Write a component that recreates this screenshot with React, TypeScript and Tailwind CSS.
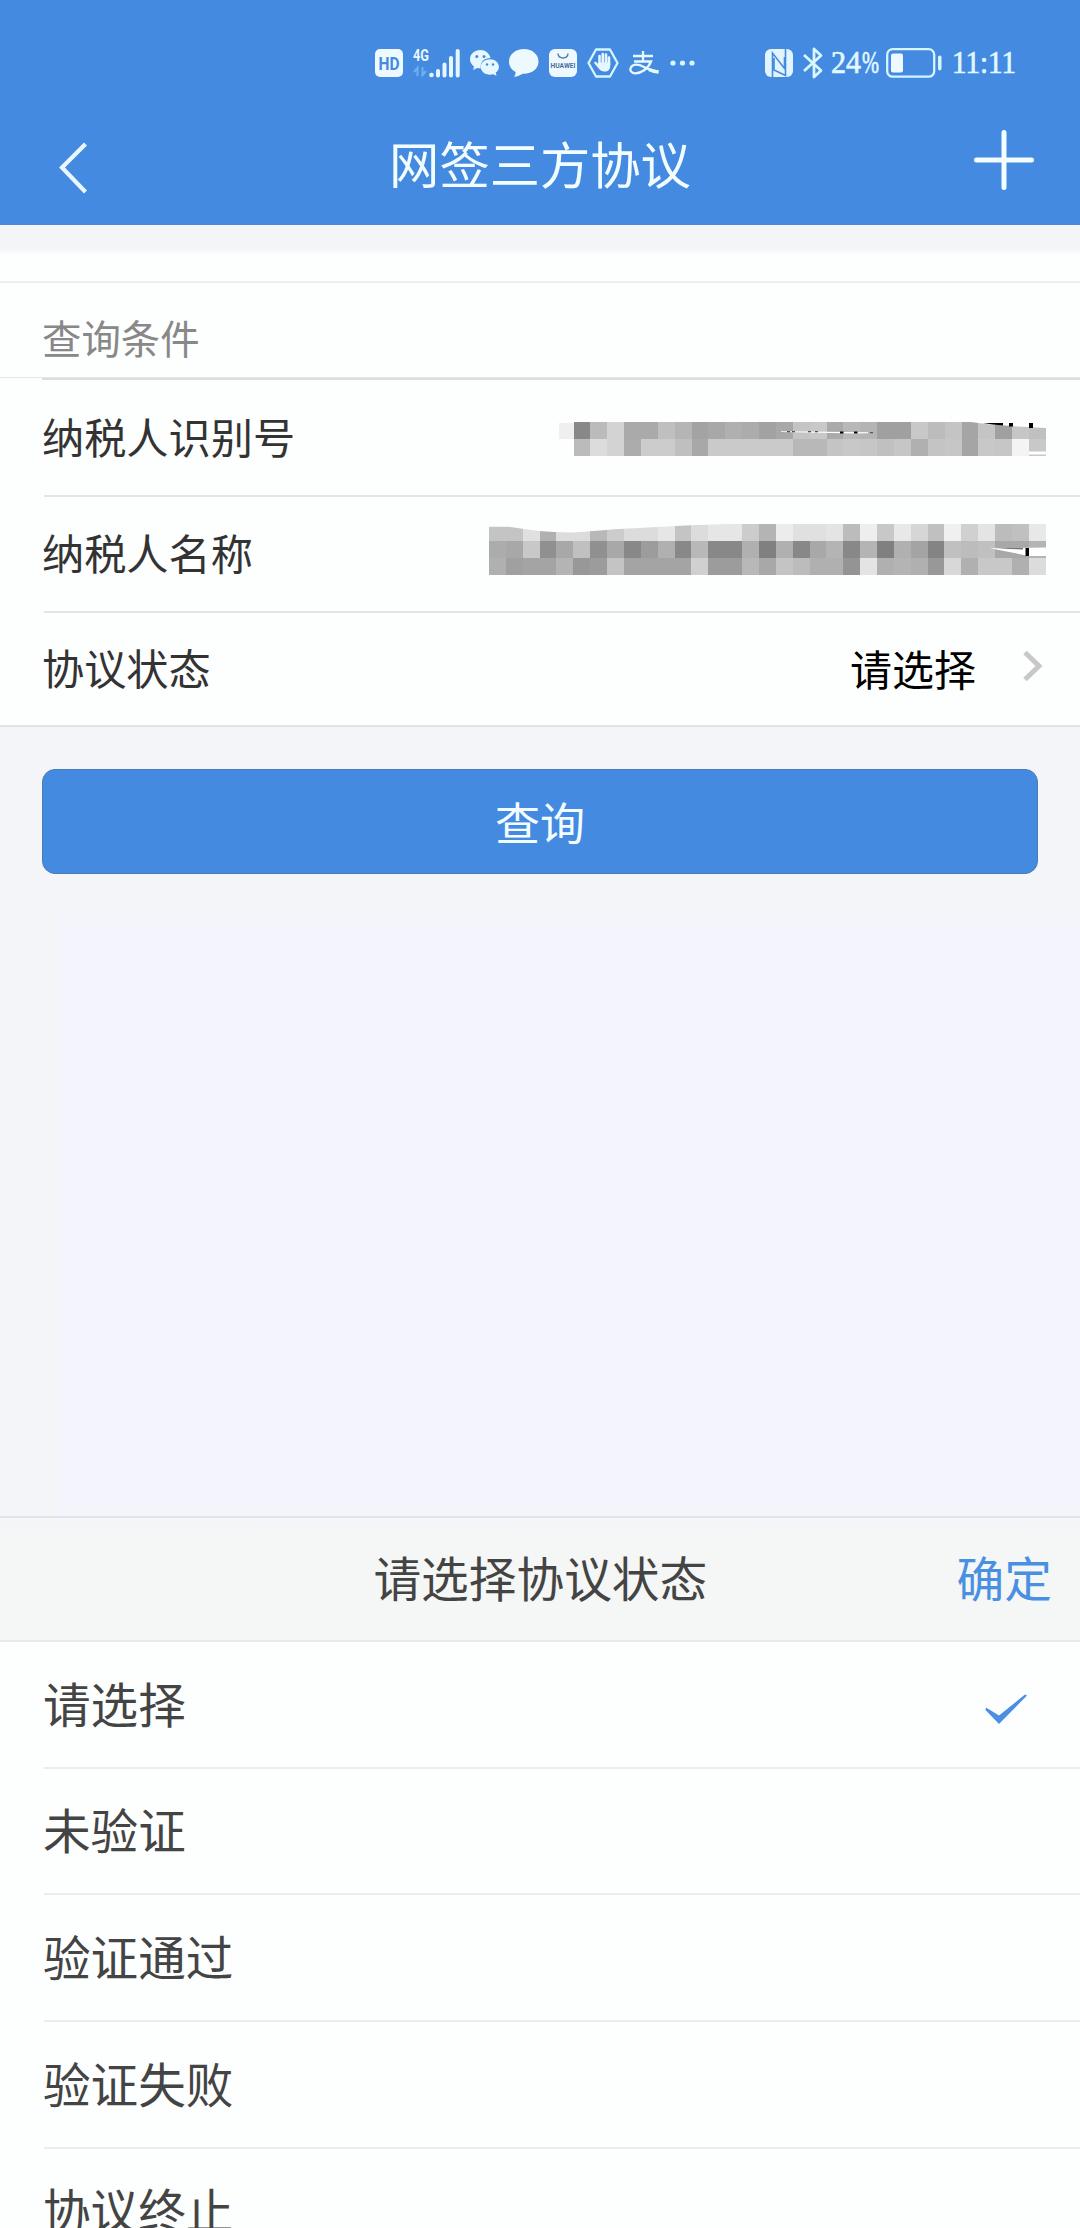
import { useState } from "react";

const statusOptions = ["请选择", "未验证", "验证通过", "验证失败", "协议终止"];

// grey levels of the masked values, one hex pair per cell
const taxNumberMask = [
  "88 bb d3 aa aa bf b5 a3 a8 b0 ac a2 a8 c4 c8 aa b8 b4 a0 a0 c8 bc c4 a5 c4 a0 c6 c0",
  "bb dc d3 ac cc cc bf a8 ca ca ca ca ca b8 b8 c4 c8 c6 c0 c6 b0 c4 c6 a5 c8 c6 f4 c8",
];

const taxNameMask = [
  "c4 c4 e0 b0 dc dc b8 cc dc dc e6 c4 dc e6 e6 cc b4 ec e0 e0 e4 bc ee c8 e8 d6 c0 f0 d0 e4 bc c0 e8",
  "ac a8 c8 90 a8 c0 90 a8 88 9c b0 88 b8 88 88 b0 80 b0 88 a8 b4 88 b4 80 b0 a4 84 c0 bc c0 a8 a8 b4",
  "b0 a0 a4 a4 b4 98 9c c4 a4 a4 a4 a4 d0 9c 9c b8 a8 c4 bc b0 b0 94 e4 b0 b4 b0 98 d8 b0 c8 c8 b0 dc",
];

const CELL = 16.87;

const MaskCells = ({ rows, offset }: { rows: string[]; offset: number }) => (
  <g shapeRendering="crispEdges">
    {rows.map((row, y) =>
      row
        .split(" ")
        .map((c, x) => (
          <rect
            key={`${x}-${y}`}
            x={offset + x * CELL}
            y={y * CELL}
            width={CELL + 0.3}
            height={CELL}
            fill={`#${c}${c}${c}`}
          />
        ))
    )}
  </g>
);

const TaxNumber = () => (
  <svg width="490" height="34" viewBox="0 0 490 34" className="mt-[3px]">
    <rect x="3" y="1" width="15" height="16" fill="#efefef" />
    <MaskCells rows={taxNumberMask} offset={17.5} />
    <path d="M225 9.3 312 10.2 312 11.3 300 11.6 225 10Z" fill="#fff" />
    <path
      d="M231 9.7h3m2 0h3m13 0h3m4 0h3m52 1h3"
      stroke="#555"
      strokeWidth="1.2"
    />
    <path d="M284 10.5h3.5m10.5 0h3.5" stroke="#000" strokeWidth="2.2" />
    <path d="M415 0H490V6L462 4.5 430 2Z" fill="#fff" />
    <path d="M427 1 447 1V3.5L437 2.6ZM453 1h4v3.5h-4zM473 1h4v5h-4z" />
    <path d="M473 29.5h17v3h-17z" fill="#fff" />
  </svg>
);

const TaxName = () => (
  <svg width="557" height="51" viewBox="0 0 557 51" className="-mt-[9px]">
    <MaskCells rows={taxNameMask} offset={0} />
    <path
      d="M0 0V2.7H20C40 6 60 8.5 80 8.5C100 8 120 5 150 4C185 2 210 .8 240 0Z"
      fill="#fdfefe"
    />
    <path d="M501 24.3 557 23.5V32H540Z" fill="#fff" />
    <path d="M508 24 534 24V25.5L520 25Z" fill="#777" />
    <path d="M536.5 24h3.5v8h-3.5z" />
  </svg>
);

const StatusIcons = () => (
  <div className="flex items-center gap-[10px]">
    {/* hd */}
    <svg width="28" height="28" viewBox="0 0 28 28">
      <rect width="28" height="28" rx="5" fill="#eef9ff" />
      <text
        x="3.5"
        y="20.5"
        textLength="21"
        lengthAdjust="spacingAndGlyphs"
        className="fill-[#448ae0] font-['Roboto',sans-serif] text-[18px] font-bold"
      >
        HD
      </text>
    </svg>
    {/* signal */}
    <svg
      width="47"
      height="30"
      viewBox="0 0 47 30"
      fill="#e6f7ff"
      className="overflow-visible"
    >
      <text
        x="0"
        y="13"
        textLength="16"
        lengthAdjust="spacingAndGlyphs"
        className="font-['Roboto',sans-serif] text-[17px] font-bold"
      >
        4G
      </text>
      <path
        d="M4.5 28V20L1 24M9.5 19v8l3.5-4"
        fill="none"
        stroke="#6fb0f2"
        strokeWidth="2"
      />
      <circle cx="18.5" cy="27" r="2.3" />
      <rect x="23" y="21" width="4" height="8.5" rx="2" />
      <rect x="29.5" y="14.5" width="4" height="15" rx="2" />
      <rect x="36" y="8" width="4" height="21.5" rx="2" />
      <rect x="42.7" y="1" width="4" height="28.5" rx="2" />
    </svg>
    {/* wechat */}
    <svg width="29" height="26" viewBox="0 0 29 26" fill="#e6f7ff">
      <path d="M10.5 0C4.5 0 0 4 0 9.3c0 3 1.5 5.5 4 7.200L3.2 20l4-2.1c1 .3 2.3.5 3.6.5C10 12 14 8 20.5 8 19.500 3.500 15.5 0 10.5 0Z" />
      <path d="M20 9.3c-5.2 0-9.2 3.3-9.2 7.7s4 7.7 9.2 7.7c1.2 0 2.2-.2 3.2-.5l3.3 1.6-.8-3c2-1.5 3.2-3.5 3.2-5.8 0-4.400-3.900-7.700-8.900-7.700Z" />
      <g fill="#448ae0">
        <circle cx="6.8" cy="6.5" r="1.5" />
        <circle cx="14" cy="6.5" r="1.5" />
        <circle cx="17" cy="14.5" r="1.2" />
        <circle cx="23" cy="14.5" r="1.2" />
      </g>
    </svg>
    {/* message */}
    <svg width="30" height="28" viewBox="0 0 30 28" fill="#eef9ff">
      <path d="M15 0C6.5 0 0 5.5 0 12.5c0 4.5 2.5 8.3 6.5 10.5.3 1.7-.3 3.2-1.5 4.7 3.5-.2 6.5-1.5 8.5-3 9.5.5 16-5 16-12.2C29.5 5.5 23.3 0 15 0Z" />
    </svg>
    {/* huawei */}
    <svg width="28" height="28" viewBox="0 0 28 28">
      <rect width="28" height="28" rx="6" fill="#eef9ff" />
      <path
        d="M9 4.5c.5 6 9.5 6 10 0"
        fill="none"
        stroke="#5c7fa8"
        strokeWidth="1.5"
      />
      <text
        x="1.5"
        y="18.5"
        textLength="25"
        lengthAdjust="spacingAndGlyphs"
        className="fill-[#4a6f9c] font-['Roboto',sans-serif] text-[6.5px] font-bold"
      >
        HUAWEI
      </text>
    </svg>
    {/* hand */}
    <svg width="32" height="30" viewBox="0 0 32 30">
      <path
        d="M9 1.5H23L30.5 15 23 28.5H9L1.5 15Z"
        fill="none"
        stroke="#d5f5ff"
        strokeWidth="2.3"
        strokeLinejoin="round"
      />
      <path
        d="M12.5 8V17M15.8 6V16M19 6.5V16M22 9.5V17M8.5 15l4.5 5"
        stroke="#e6f7ff"
        strokeWidth="2.6"
        strokeLinecap="round"
      />
      <path
        d="M11.3 14.5H23.2V18c0 3-2 5.5-4.5 5.5h-2C14 23.5 12 21 10.5 18.5Z"
        fill="#e6f7ff"
      />
    </svg>
    {/* alipay */}
    <svg
      width="30"
      height="24"
      viewBox="0 0 30 24"
      fill="none"
      stroke="#e6f9ff"
      strokeWidth="2.3"
    >
      <path d="M4 5H24M14 0V10M5 10.5H22C19 18 12 22.5 6 22.3 2 22.2.5 19 2 16.3 4 13 9.5 13 14 15.5 19 18 24 20 29.5 20.5" />
      <path d="M20 18.5C23 20 26 21 29.5 21" strokeWidth="3.5" />
    </svg>
    {/* more */}
    <svg width="25" height="6" viewBox="0 0 25 6" fill="#d9f6ff" className="ml-px">
      <circle cx="3" cy="3" r="2.6" />
      <circle cx="12.5" cy="3" r="2.6" />
      <circle cx="22" cy="3" r="2.6" />
    </svg>
  </div>
);

const StatusRight = () => (
  <div className="flex items-center">
    {/* nfc */}
    <svg width="28" height="28" viewBox="0 0 28 28">
      <rect width="28" height="28" rx="6" fill="#e2f5ff" />
      <path
        d="M7.5 28V4L19.5 19.5V8M9 9V21L20.5 26.5V0"
        fill="none"
        stroke="#448ae0"
        strokeWidth="1.6"
      />
    </svg>
    {/* bluetooth */}
    <svg
      width="20"
      height="32"
      viewBox="0 0 20 32"
      fill="none"
      stroke="#d9f6ff"
      strokeWidth="2.8"
      strokeLinejoin="round"
      className="ml-[10px]"
    >
      <path d="M1 8 18 23.5 11 30V2L18 8.5 1 24" />
    </svg>
    <svg
      width="48"
      height="30"
      viewBox="0 0 48 30"
      fill="#e0f8ff"
      stroke="#e0f8ff"
      strokeWidth="0.7"
      className="ml-[9px] overflow-visible"
    >
      <text
        x="-1"
        y="25"
        textLength="30"
        lengthAdjust="spacingAndGlyphs"
        className="font-['Liberation_Serif',serif] text-[32px]"
      >
        24
      </text>
      <text
        x="30"
        y="25"
        textLength="17"
        lengthAdjust="spacingAndGlyphs"
        className="font-['Liberation_Serif',serif] text-[32px]"
      >
        %
      </text>
    </svg>
    {/* battery */}
    <svg width="56" height="30" viewBox="0 0 56 30" className="ml-[6px]">
      <rect
        x="1.2"
        y="1.2"
        width="47"
        height="27.5"
        rx="5.5"
        fill="none"
        stroke="#d5f5ff"
        strokeWidth="2.3"
      />
      <rect x="5" y="5.5" width="12" height="19" rx="2" fill="#eef9ff" />
      <rect x="52" y="7.5" width="3.5" height="15" rx="1.7" fill="#d5f5ff" />
    </svg>
    <svg
      width="62"
      height="30"
      viewBox="0 0 62 30"
      fill="#e0f8ff"
      stroke="#e0f8ff"
      strokeWidth="0.7"
      className="ml-[12px] overflow-visible"
    >
      <text
        x="-2"
        y="25"
        textLength="64"
        lengthAdjust="spacingAndGlyphs"
        className="font-['Liberation_Serif',serif] text-[32px]"
      >
        11:11
      </text>
    </svg>
  </div>
);

const Header = () => (
  <header className="flex h-[225px] flex-col bg-[#448ae0]">
    <div className="flex h-[106px] items-center justify-between pl-[375px] pr-[64px] pt-5">
      <StatusIcons />
      <StatusRight />
    </div>
    <div className="flex h-[119px] items-center justify-between pl-[59px] pr-[46px]">
      <svg width="47" height="52" viewBox="0 0 47 52" className="mt-[5px]">
        <path
          d="M26.5 2 3 25.5 26.5 50"
          fill="none"
          stroke="#eaf7ff"
          strokeWidth="4.2"
        />
      </svg>
      <h1 className="pb-[6px] text-[50.3px] leading-none text-[#f2fdff]">
        网签三方协议
      </h1>
      <svg width="60" height="60" viewBox="0 0 60 60" className="-mt-[12px]">
        <path
          d="M30 2.5V57.5M2.5 30H57.5"
          stroke="#f5feff"
          strokeWidth="5"
          strokeLinecap="round"
        />
      </svg>
    </div>
  </header>
);

const FormRow = ({
  label,
  last,
  children,
}: {
  label: string;
  last?: boolean;
  children: React.ReactNode;
}) => (
  <div
    className={`flex items-center justify-between pr-[34px] ${
      last
        ? "h-[112px] pl-[42px]"
        : "ml-[44px] h-[116.5px] border-b-2 border-[#e3e4e4]"
    }`}
  >
    <span
      className={`pb-[3px] text-[42.2px] leading-none text-[#333] ${
        last ? "" : "-ml-[2px]"
      }`}
    >
      {label}
    </span>
    {children}
  </div>
);

const App = () => {
  const [selected, setSelected] = useState(0);

  return (
    <div className="flex h-[2228px] w-[1080px] flex-col overflow-hidden bg-[#f3f5f9] font-['Noto_Sans_CJK_SC',sans-serif]">
      <Header />
      <div className="h-[28px] shrink-0 bg-linear-to-b from-[#f3f5f7] from-80% to-[#fafbfc]" />

      <section className="shrink-0 border-b-2 border-[#e1e3e6] bg-[#fdfefe]">
        <div className="h-[30px] border-b-2 border-[#eceef0]" />
        <div className="flex h-[95px] items-center border-b border-[#e6e8e8] pl-[42px] pt-[13px]">
          <h2 className="text-[39.4px] leading-none text-[#888]">查询条件</h2>
        </div>
        <div className="ml-[42px] h-[2px] bg-[#dcdcdc]" />
        <FormRow label="纳税人识别号">
          <TaxNumber />
        </FormRow>
        <FormRow label="纳税人名称">
          <TaxName />
        </FormRow>
        <FormRow label="协议状态" last>
          <div className="flex items-center">
            <span className="pb-[3px] text-[42px] leading-none text-black">
              {statusOptions[selected]}
            </span>
            <svg
              width="24"
              height="32"
              viewBox="0 0 24 32"
              className="-mt-[6px] ml-[46px]"
            >
              <path
                d="M3 2.5 17 16 3 29.5"
                fill="none"
                stroke="#c8c8c8"
                strokeWidth="5"
              />
            </svg>
          </div>
        </FormRow>
      </section>

      <button className="mx-[42px] mt-[42px] h-[105px] shrink-0 rounded-[13px] border border-[#4b7cb5] bg-[#448ae0] text-[45px] leading-none text-[#f2fdff]">
        查询
      </button>

      <div className="mt-6 ml-[58px] flex-1 bg-linear-to-b from-[#f3f5f9] to-[#f4f4fd] to-5%" />

      {/* bottom sheet */}
      <section className="h-[712px] shrink-0 overflow-hidden border-t-2 border-[#e2e3e8] bg-[#fdfefe]">
        <div className="flex h-[124px] items-center justify-between border-b-2 border-[#e8eaea] bg-linear-to-b from-[#f3f5fa] to-[#f5f6f6] to-15% pl-[28px] pr-[28px]">
          <span className="w-[96px]" />
          <h2 className="pb-[5px] text-[47.7px] leading-none text-[#444]">
            请选择协议状态
          </h2>
          <button className="pb-[5px] text-[47.7px] leading-none text-[#4a90e2]">
            确定
          </button>
        </div>
        {statusOptions.map((option, i) => (
          <div
            key={option}
            onClick={() => setSelected(i)}
            className="ml-[44px] flex h-[126.7px] items-center justify-between border-b-2 border-[#ebecec] pr-[52px]"
          >
            <span className="-ml-px pb-[4px] text-[47.6px] leading-none text-[#444]">
              {option}
            </span>
            {i === selected && (
              <svg width="43" height="30" viewBox="0 0 43 30" className="mt-[10px]">
                <path
                  d="M1 13.5 14 21.5 40 .5 42 1.5 14 30 .5 16Z"
                  fill="#4a90e2"
                />
              </svg>
            )}
          </div>
        ))}
      </section>
    </div>
  );
};

export default App;
